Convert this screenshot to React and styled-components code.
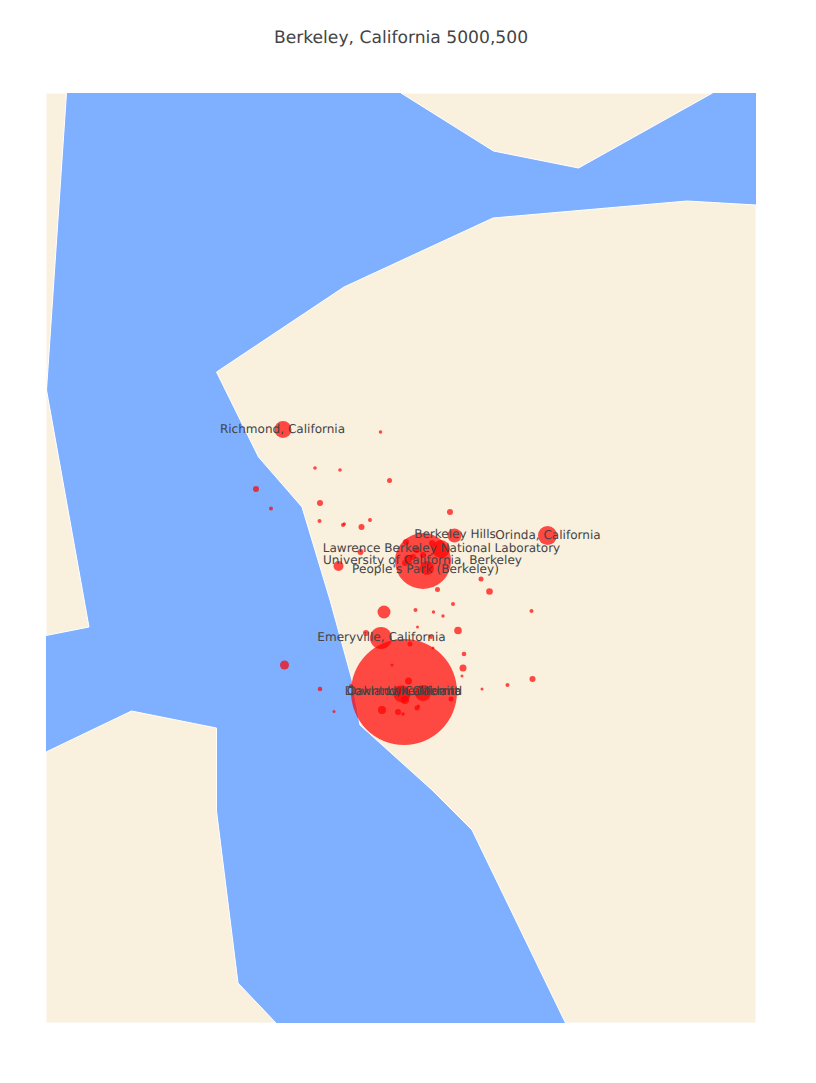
import React from 'react';
import styled, { createGlobalStyle } from 'styled-components';

const GlobalStyle = createGlobalStyle`
  html, body {
    margin: 0;
    background: #fff;
  }
`;

const Chart = styled.figure`
  width: 802px;
  height: 1083px;
  margin: 0;
  font-family: "DejaVu Sans", Verdana, sans-serif;
  color: #444;
  text-rendering: geometricPrecision;
`;

const Title = styled.figcaption`
  height: 93px;
  padding-top: 28px;
  box-sizing: border-box;
  font-size: 17.15px;
  line-height: 20px;
  text-align: center;
`;

const MapFrame = styled.div`
  width: 710px;
  height: 930px;
  margin-left: 46px;
`;

const MapSvg = styled.svg`
  display: block;
`;

const Land = styled.polygon`
  fill: #faf0de;
  stroke: #fff;
  stroke-width: 1;
`;

const Bubble = styled.circle`
  fill: #ff0000;
  fill-opacity: 0.7;
`;

const Label = styled.text`
  font-size: 12.05px;
  fill: #444;
  text-anchor: middle;
`;

// page coordinates, the svg viewBox starts at the plot's corner
const lands = [
  '401,93 493.5,151 578.5,168 712.5,93',
  '46,93 66.5,93 46.5,390 89,627 46,635.5',
  '756,205 687,201 493,218 344,287 216.5,372 258.5,457 302,507 330,600 352,680 360,725 432,790 472,830 565.5,1023 756,1023',
  '46,752 131.5,711 216.5,728 216.5,811 238,983 276,1023 46,1023',
];

const bubbles = [
  [404, 692, 53], [423, 561, 28], [381, 638, 11], [547.5, 535.5, 9.5], [283, 429.5, 8.5],
  [441, 549, 9], [427, 568, 7], [454.5, 535.5, 7], [384, 612, 6.5], [423, 693, 8],
  [402, 694, 8.5], [338.5, 566, 5], [284.5, 665, 4.5], [408, 559, 4], [399, 690, 4],
  [405, 700, 4], [382, 710, 4], [458, 630.5, 3.8], [463, 668, 3.5], [489.5, 591.5, 3.3],
  [406, 542, 3], [450, 512, 3], [320, 503, 3], [361.5, 527, 3], [360.5, 552, 3],
  [366, 633, 3], [408.5, 681, 3.5], [398, 712, 3], [532.5, 679, 3], [256, 489, 3],
  [481, 579, 2.5], [437.5, 589.5, 2.5], [410, 644, 2.5], [451, 699, 2.5], [417, 708, 2.5],
  [389.5, 480.5, 2.5], [464, 654, 2.3], [320, 689, 2.3], [319.5, 521, 2], [343, 525, 2],
  [370, 520, 2], [453, 604, 2], [415.5, 610, 2], [531.5, 611, 2], [431, 637, 2],
  [507.5, 685, 2], [351, 686, 2], [271, 508.5, 2], [380.5, 432, 1.8], [315, 468, 1.8],
  [340, 470, 1.8], [344.3, 524, 1.7], [433.5, 612, 1.7], [443, 616, 1.7], [403, 714, 1.7],
  [417.5, 627, 1.5], [433, 648, 1.5], [392, 665, 1.5], [462, 676, 1.5], [482, 689, 1.5],
  [334, 711.5, 1.5], [418.5, 706, 1.5], [413, 557, 3], [417, 550, 3], [432, 543, 3],
  [405, 563, 3], [423, 555, 3],
];

const labels = [
  { text: 'Richmond, California', x: 282.5, y: 433 },
  { text: 'Berkeley Hills', x: 455, y: 538 },
  { text: 'Orinda, California', x: 548, y: 539 },
  { text: 'Lawrence Berkeley National Laboratory', x: 441.5, y: 552 },
  { text: 'University of California, Berkeley', x: 422.5, y: 564, width: 199 },
  { text: "People's Park (Berkeley)", x: 425.5, y: 573, width: 147 },
  { text: 'Emeryville, California', x: 381.5, y: 641 },
  { text: 'Oakland, California', x: 404, y: 695 },
  { text: 'Downtown Oakland', x: 403.5, y: 695 },
  { text: 'Lake Merritt', x: 423, y: 695 },
];

export default function App() {
  return (
    <Chart>
      <GlobalStyle />
      <Title>Berkeley, California 5000,500</Title>
      <MapFrame>
        <MapSvg width="710" height="930" viewBox="46 93 710 930">
          <rect x="46" y="93" width="710" height="930" fill="#7fafff" />
          {lands.map((points) => <Land key={points} points={points} />)}
          {bubbles.map(([x, y, r]) => <Bubble key={`${x}-${y}`} cx={x} cy={y} r={r} />)}
          {labels.map(({ text, x, y, width }) => (
            <Label key={text} x={x} y={y} textLength={width}>{text}</Label>
          ))}
        </MapSvg>
      </MapFrame>
    </Chart>
  );
}
